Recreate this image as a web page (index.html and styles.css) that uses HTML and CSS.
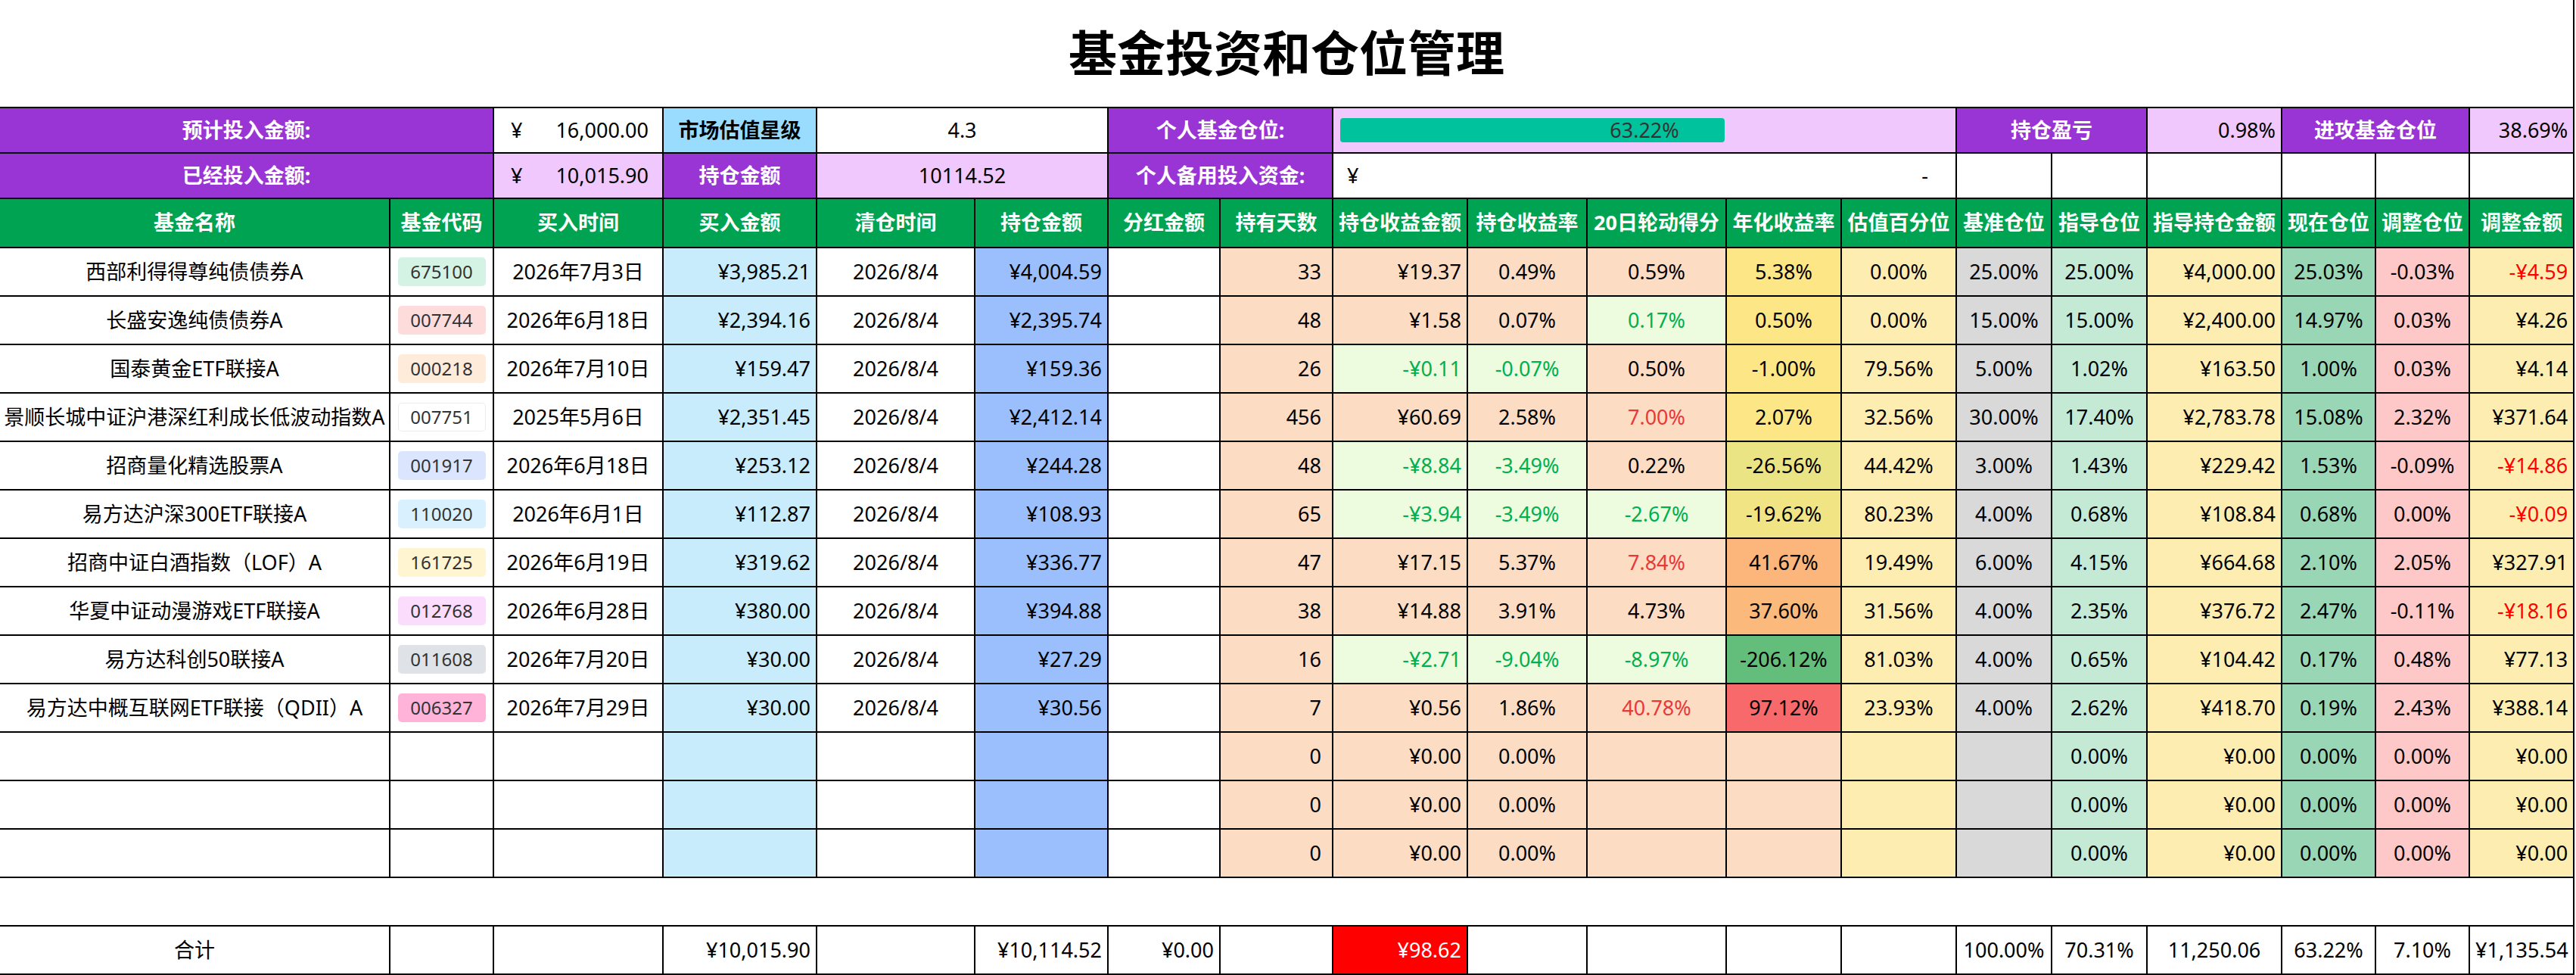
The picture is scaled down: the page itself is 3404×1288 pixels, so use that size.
FILE: index.html
```html
<!DOCTYPE html>
<html lang="zh-CN">
<head>
<meta charset="utf-8">
<title>基金投资和仓位管理</title>
<link rel="stylesheet" href="styles.css">
</head>
<body>
<table class="sheet">
<colgroup>
<col class="w515"><col class="w137"><col class="w224"><col class="w203"><col class="w209"><col class="w176"><col class="w148"><col class="w149"><col class="w178"><col class="w158"><col class="w184"><col class="w152"><col class="w152"><col class="w126"><col class="w126"><col class="w178"><col class="w124"><col class="w124"><col class="w138">
</colgroup>
<tbody>
<tr class="r-title"><td class="title" colspan="19">基金投资和仓位管理</td></tr>

<tr class="r-sum">
<td colspan="2" class="lab">预计投入金额:</td>
<td class="acc"><div class="accbox"><span>¥</span><span>16,000.00</span></div></td>
<td class="lab-blue">市场估值星级</td>
<td colspan="2">4.3</td>
<td colspan="2" class="lab">个人基金仓位:</td>
<td colspan="5" class="lpur prog"><div class="track"><div class="bar" style="width:63.22%"></div><div class="bar-label">63.22%</div></div></td>
<td colspan="2" class="lab">持仓盈亏</td>
<td class="lpur r">0.98%</td>
<td colspan="2" class="lab">进攻基金仓位</td>
<td class="lpur r">38.69%</td>
</tr>

<tr class="r-sum">
<td colspan="2" class="lab">已经投入金额:</td>
<td class="acc lpur"><div class="accbox"><span>¥</span><span>10,015.90</span></div></td>
<td class="lab">持仓金额</td>
<td colspan="2" class="lpur">10114.52</td>
<td colspan="2" class="lab">个人备用投入资金:</td>
<td colspan="5" class="acc2"><div class="accbox"><span>¥</span><span>-</span></div></td>
<td></td><td></td><td></td><td></td><td></td><td></td>
</tr>

<tr class="r-head">
<td class="namecol">基金名称</td><td>基金代码</td><td>买入时间</td><td>买入金额</td><td>清仓时间</td><td>持仓金额</td><td>分红金额</td><td>持有天数</td><td>持仓收益金额</td><td>持仓收益率</td><td>20日轮动得分</td><td>年化收益率</td><td>估值百分位</td><td>基准仓位</td><td>指导仓位</td><td>指导持仓金额</td><td>现在仓位</td><td>调整仓位</td><td>调整金额</td>
</tr>

<tr class="r-data">
<td class="namecol">西部利得得尊纯债债券A</td><td><span class="code b-mint">675100</span></td><td>2026年7月3日</td><td class="c-buy r">¥3,985.21</td><td>2026/8/4</td><td class="c-hold r">¥4,004.59</td><td></td><td class="c-pe rd">33</td><td class="c-pe r">¥19.37</td><td class="c-pe">0.49%</td><td class="c-pe">0.59%</td><td class="a-y">5.38%</td><td class="c-yel">0.00%</td><td class="c-gray">25.00%</td><td class="c-mint">25.00%</td><td class="c-yel r">¥4,000.00</td><td class="c-cur">25.03%</td><td class="c-pink">-0.03%</td><td class="c-yel r t-r">-¥4.59</td>
</tr>
<tr class="r-data">
<td class="namecol">长盛安逸纯债债券A</td><td><span class="code b-pink">007744</span></td><td>2026年6月18日</td><td class="c-buy r">¥2,394.16</td><td>2026/8/4</td><td class="c-hold r">¥2,395.74</td><td></td><td class="c-pe rd">48</td><td class="c-pe r">¥1.58</td><td class="c-pe">0.07%</td><td class="c-lg t-g">0.17%</td><td class="a-y">0.50%</td><td class="c-yel">0.00%</td><td class="c-gray">15.00%</td><td class="c-mint">15.00%</td><td class="c-yel r">¥2,400.00</td><td class="c-cur">14.97%</td><td class="c-pink">0.03%</td><td class="c-yel r">¥4.26</td>
</tr>
<tr class="r-data">
<td class="namecol">国泰黄金ETF联接A</td><td><span class="code b-peach">000218</span></td><td>2026年7月10日</td><td class="c-buy r">¥159.47</td><td>2026/8/4</td><td class="c-hold r">¥159.36</td><td></td><td class="c-pe rd">26</td><td class="c-lg r t-g">-¥0.11</td><td class="c-lg t-g">-0.07%</td><td class="c-pe">0.50%</td><td class="a-y">-1.00%</td><td class="c-yel">79.56%</td><td class="c-gray">5.00%</td><td class="c-mint">1.02%</td><td class="c-yel r">¥163.50</td><td class="c-cur">1.00%</td><td class="c-pink">0.03%</td><td class="c-yel r">¥4.14</td>
</tr>
<tr class="r-data">
<td class="namecol">景顺长城中证沪港深红利成长低波动指数A</td><td><span class="code b-white">007751</span></td><td>2025年5月6日</td><td class="c-buy r">¥2,351.45</td><td>2026/8/4</td><td class="c-hold r">¥2,412.14</td><td></td><td class="c-pe rd">456</td><td class="c-pe r">¥60.69</td><td class="c-pe">2.58%</td><td class="c-pe t-r2">7.00%</td><td class="a-y">2.07%</td><td class="c-yel">32.56%</td><td class="c-gray">30.00%</td><td class="c-mint">17.40%</td><td class="c-yel r">¥2,783.78</td><td class="c-cur">15.08%</td><td class="c-pink">2.32%</td><td class="c-yel r">¥371.64</td>
</tr>
<tr class="r-data">
<td class="namecol">招商量化精选股票A</td><td><span class="code b-blue">001917</span></td><td>2026年6月18日</td><td class="c-buy r">¥253.12</td><td>2026/8/4</td><td class="c-hold r">¥244.28</td><td></td><td class="c-pe rd">48</td><td class="c-lg r t-g">-¥8.84</td><td class="c-lg t-g">-3.49%</td><td class="c-pe">0.22%</td><td class="a-y2">-26.56%</td><td class="c-yel">44.42%</td><td class="c-gray">3.00%</td><td class="c-mint">1.43%</td><td class="c-yel r">¥229.42</td><td class="c-cur">1.53%</td><td class="c-pink">-0.09%</td><td class="c-yel r t-r">-¥14.86</td>
</tr>
<tr class="r-data">
<td class="namecol">易方达沪深300ETF联接A</td><td><span class="code b-cyan">110020</span></td><td>2026年6月1日</td><td class="c-buy r">¥112.87</td><td>2026/8/4</td><td class="c-hold r">¥108.93</td><td></td><td class="c-pe rd">65</td><td class="c-lg r t-g">-¥3.94</td><td class="c-lg t-g">-3.49%</td><td class="c-lg t-g">-2.67%</td><td class="a-y3">-19.62%</td><td class="c-yel">80.23%</td><td class="c-gray">4.00%</td><td class="c-mint">0.68%</td><td class="c-yel r">¥108.84</td><td class="c-cur">0.68%</td><td class="c-pink">0.00%</td><td class="c-yel r t-r">-¥0.09</td>
</tr>
<tr class="r-data">
<td class="namecol">招商中证白酒指数（LOF）A</td><td><span class="code b-yellow">161725</span></td><td>2026年6月19日</td><td class="c-buy r">¥319.62</td><td>2026/8/4</td><td class="c-hold r">¥336.77</td><td></td><td class="c-pe rd">47</td><td class="c-pe r">¥17.15</td><td class="c-pe">5.37%</td><td class="c-pe t-r2">7.84%</td><td class="a-o1">41.67%</td><td class="c-yel">19.49%</td><td class="c-gray">6.00%</td><td class="c-mint">4.15%</td><td class="c-yel r">¥664.68</td><td class="c-cur">2.10%</td><td class="c-pink">2.05%</td><td class="c-yel r">¥327.91</td>
</tr>
<tr class="r-data">
<td class="namecol">华夏中证动漫游戏ETF联接A</td><td><span class="code b-lilac">012768</span></td><td>2026年6月28日</td><td class="c-buy r">¥380.00</td><td>2026/8/4</td><td class="c-hold r">¥394.88</td><td></td><td class="c-pe rd">38</td><td class="c-pe r">¥14.88</td><td class="c-pe">3.91%</td><td class="c-pe">4.73%</td><td class="a-o2">37.60%</td><td class="c-yel">31.56%</td><td class="c-gray">4.00%</td><td class="c-mint">2.35%</td><td class="c-yel r">¥376.72</td><td class="c-cur">2.47%</td><td class="c-pink">-0.11%</td><td class="c-yel r t-r">-¥18.16</td>
</tr>
<tr class="r-data">
<td class="namecol">易方达科创50联接A</td><td><span class="code b-gray">011608</span></td><td>2026年7月20日</td><td class="c-buy r">¥30.00</td><td>2026/8/4</td><td class="c-hold r">¥27.29</td><td></td><td class="c-pe rd">16</td><td class="c-lg r t-g">-¥2.71</td><td class="c-lg t-g">-9.04%</td><td class="c-lg t-g">-8.97%</td><td class="a-g">-206.12%</td><td class="c-yel">81.03%</td><td class="c-gray">4.00%</td><td class="c-mint">0.65%</td><td class="c-yel r">¥104.42</td><td class="c-cur">0.17%</td><td class="c-pink">0.48%</td><td class="c-yel r">¥77.13</td>
</tr>
<tr class="r-data">
<td class="namecol">易方达中概互联网ETF联接（QDII）A</td><td><span class="code b-hot">006327</span></td><td>2026年7月29日</td><td class="c-buy r">¥30.00</td><td>2026/8/4</td><td class="c-hold r">¥30.56</td><td></td><td class="c-pe rd">7</td><td class="c-pe r">¥0.56</td><td class="c-pe">1.86%</td><td class="c-pe t-r2">40.78%</td><td class="a-r">97.12%</td><td class="c-yel">23.93%</td><td class="c-gray">4.00%</td><td class="c-mint">2.62%</td><td class="c-yel r">¥418.70</td><td class="c-cur">0.19%</td><td class="c-pink">2.43%</td><td class="c-yel r">¥388.14</td>
</tr>
<tr class="r-data">
<td class="namecol"></td><td></td><td></td><td class="c-buy"></td><td></td><td class="c-hold"></td><td></td><td class="c-pe rd">0</td><td class="c-pe r">¥0.00</td><td class="c-pe">0.00%</td><td class="c-pe"></td><td class="c-pe"></td><td class="c-yel"></td><td class="c-gray"></td><td class="c-mint">0.00%</td><td class="c-yel r">¥0.00</td><td class="c-cur">0.00%</td><td class="c-pink">0.00%</td><td class="c-yel r">¥0.00</td>
</tr>
<tr class="r-data">
<td class="namecol"></td><td></td><td></td><td class="c-buy"></td><td></td><td class="c-hold"></td><td></td><td class="c-pe rd">0</td><td class="c-pe r">¥0.00</td><td class="c-pe">0.00%</td><td class="c-pe"></td><td class="c-pe"></td><td class="c-yel"></td><td class="c-gray"></td><td class="c-mint">0.00%</td><td class="c-yel r">¥0.00</td><td class="c-cur">0.00%</td><td class="c-pink">0.00%</td><td class="c-yel r">¥0.00</td>
</tr>
<tr class="r-data">
<td class="namecol"></td><td></td><td></td><td class="c-buy"></td><td></td><td class="c-hold"></td><td></td><td class="c-pe rd">0</td><td class="c-pe r">¥0.00</td><td class="c-pe">0.00%</td><td class="c-pe"></td><td class="c-pe"></td><td class="c-yel"></td><td class="c-gray"></td><td class="c-mint">0.00%</td><td class="c-yel r">¥0.00</td><td class="c-cur">0.00%</td><td class="c-pink">0.00%</td><td class="c-yel r">¥0.00</td>
</tr>

<tr class="r-data"><td class="gap" colspan="19"></td></tr>

<tr class="r-data">
<td class="namecol">合计</td><td></td><td></td><td class="r">¥10,015.90</td><td></td><td class="r">¥10,114.52</td><td class="r">¥0.00</td><td></td><td class="r total-red">¥98.62</td><td></td><td></td><td></td><td></td><td>100.00%</td><td>70.31%</td><td>11,250.06</td><td>63.22%</td><td>7.10%</td><td class="r">¥1,135.54</td>
</tr>
</tbody>
</table>
</body>
</html>
```

FILE: styles.css
```css
html, body {
  margin: 0;
  padding: 0;
  background: #ffffff;
}

body {
  font-family: "Noto Sans", "Noto Sans CJK SC", sans-serif;
  color: #000;
}

.sheet {
  border-collapse: collapse;
  table-layout: fixed;
  width: 3402px;
}

.w515 { width: 515px; }
.w137 { width: 137px; }
.w224 { width: 224px; }
.w203 { width: 203px; }
.w209 { width: 209px; }
.w176 { width: 176px; }
.w148 { width: 148px; }
.w149 { width: 149px; }
.w178 { width: 178px; }
.w158 { width: 158px; }
.w184 { width: 184px; }
.w152 { width: 152px; }
.w126 { width: 126px; }
.w124 { width: 124px; }
.w138 { width: 138px; }

.sheet td {
  border: 2px solid #000;
  padding: 0 7px;
  font-size: 27px;
  line-height: 1.2;
  text-align: center;
  vertical-align: middle;
  white-space: nowrap;
  overflow: hidden;
}

.sheet tr > td:first-child {
  border-left: none;
}

.r-title td { height: 141px; }
.r-sum td { height: 58px; }
.r-head td { height: 63px; }
.r-data td { height: 62px; }

.sheet td.title {
  border-top: none;
  border-left: none;
  font-size: 64px;
  font-weight: 700;
  letter-spacing: 0;
}

.sheet td.namecol { padding: 0; }

.sheet td.gap {
  border-left: none;
}

/* summary */
.lab {
  background: #9a35d5;
  color: #fff;
  font-weight: 700;
}

.lab-blue {
  background: #9adcfd;
  color: #000;
  font-weight: 700;
}

.lpur { background: #f1c8fd; }

.sheet td.acc { padding: 0 18px 0 22px; }
.sheet td.acc2 { padding: 0 36px 0 18px; }

.accbox {
  display: flex;
  justify-content: space-between;
  align-items: center;
}

.sheet td.prog { padding: 0 9px; }

.track {
  position: relative;
  height: 32px;
}

.bar {
  height: 32px;
  background: #00c39d;
  border-radius: 4px;
}

.bar-label {
  position: absolute;
  left: 0;
  right: 0;
  top: 0;
  line-height: 32px;
  text-align: center;
  color: #333;
  font-size: 27px;
}

/* header */
.r-head td {
  background: #00a352;
  color: #fff;
  font-weight: 700;
}

/* alignment */
.sheet td.r { text-align: right; }
.sheet td.rd { text-align: right; padding-right: 14px; }

/* fills */
.c-buy { background: #c9ecfd; }
.c-hold { background: #9bbffd; }
.c-pe { background: #fddcc4; }
.c-lg { background: #edfbdf; }
.c-yel { background: #feedb1; }
.c-gray { background: #d9d9d9; }
.c-mint { background: #c4ead6; }
.c-cur { background: #99d6b5; }
.c-pink { background: #fec8c8; }

.a-y { background: #fde685; }
.a-y2 { background: #ebe485; }
.a-y3 { background: #f0e485; }
.a-o1 { background: #fcb57a; }
.a-o2 { background: #fbb97c; }
.a-g { background: #63be7b; }
.a-r { background: #f8696b; }

.t-g { color: #00b050; }
.t-r { color: #ff0000; }
.t-r2 { color: #e8393a; }

.total-red {
  background: #ff0000;
  color: #fff;
}

/* code badges */
.code {
  display: inline-block;
  width: 116px;
  height: 38px;
  line-height: 38px;
  border-radius: 5px;
  font-size: 24px;
  color: #333;
  vertical-align: middle;
}

.b-mint { background: #d4f3e4; }
.b-pink { background: #ffdcdc; }
.b-peach { background: #ffebd9; }
.b-white { background: #ffffff; box-shadow: inset 0 0 0 1px #ececec; }
.b-blue { background: #dbe6fe; }
.b-cyan { background: #d9f1fe; }
.b-yellow { background: #fff5d0; }
.b-lilac { background: #fbdcfd; }
.b-gray { background: #dfe2e6; }
.b-hot { background: #ffb3d9; }
```
